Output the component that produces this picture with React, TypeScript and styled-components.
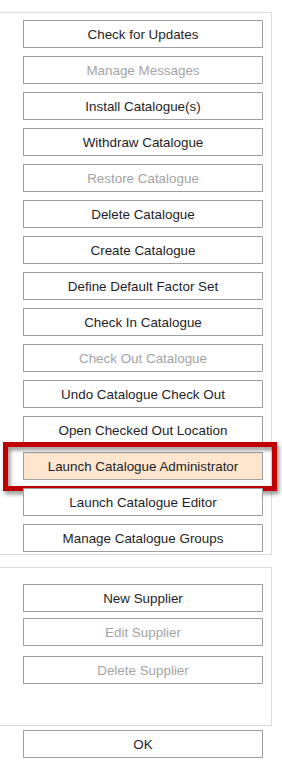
import React from 'react';
import styled, { createGlobalStyle } from 'styled-components';

const GlobalStyle = createGlobalStyle`
	html, body {
		margin: 0;
		padding: 0;
		background: #ffffff;
	}
	body {
		font-family: "Liberation Sans", Arial, sans-serif;
		overflow: hidden;
	}
`;

interface ActionItem {
	label: string,
	disabled?: boolean,
	highlighted?: boolean
}

const catalogueActions: ActionItem[] = [
	{ label: 'Check for Updates' },
	{ label: 'Manage Messages', disabled: true },
	{ label: 'Install Catalogue(s)' },
	{ label: 'Withdraw Catalogue' },
	{ label: 'Restore Catalogue', disabled: true },
	{ label: 'Delete Catalogue' },
	{ label: 'Create Catalogue' },
	{ label: 'Define Default Factor Set' },
	{ label: 'Check In Catalogue' },
	{ label: 'Check Out Catalogue', disabled: true },
	{ label: 'Undo Catalogue Check Out' },
	{ label: 'Open Checked Out Location' },
	{ label: 'Launch Catalogue Administrator', highlighted: true },
	{ label: 'Launch Catalogue Editor' },
	{ label: 'Manage Catalogue Groups' }
];

const Page = styled.div`
	display: flex;
	flex-direction: column;
	padding-top: 12px;
	width: 282px;
	height: 772px;
	box-sizing: border-box;
`;

const Panel = styled.div<{ $padTop: number, $padBottom: number, $spaceAbove?: number }>`
	display: flex;
	flex-direction: column;
	width: 273px;
	margin: ${(p) => p.$spaceAbove || 0}px 0 0 -1px;
	box-sizing: border-box;
	border: 1px solid #dcdcdc;
	padding: ${(p) => p.$padTop}px 9px ${(p) => p.$padBottom}px 23px;
`;

const ButtonList = styled.div`
	display: flex;
	flex-direction: column;
	gap: 8px;
`;

const ActionButton = styled.button<{ $highlighted?: boolean, $gap?: number }>`
	position: relative;
	width: 240px;
	height: 28px;
	margin: ${(p) => p.$gap || 0}px 0 0 0;
	padding: 0;
	box-sizing: border-box;
	border: 1px solid #a0a0a0;
	border-radius: 0;
	background: ${(p) => (p.$highlighted ? '#fde6cd' : '#ffffff')};
	color: #1e1e28;
	font-family: "Liberation Sans", Arial, sans-serif;
	font-size: 13.4px;
	line-height: 27px;
	text-align: center;
	cursor: pointer;

	&:disabled {
		color: #a4a4a4;
		cursor: default;
	}
`;

const Callout = styled.span`
	position: absolute;
	top: -11px;
	left: -21px;
	right: -15px;
	bottom: -12px;
	border: 5px solid #c00000;
	pointer-events: none;
	filter: drop-shadow(2px 3px 2px rgba(0, 0, 0, 0.45));
`;

const Footer = styled.div`
	display: flex;
	padding: 4px 0 0 23px;
`;

export default function App() {
	return (
		<>
			<GlobalStyle />
			<Page>
				<Panel $padTop={7} $padBottom={2}>
					<ButtonList>
						{catalogueActions.map(({ label, disabled, highlighted }) => (
							<ActionButton key={label} disabled={disabled} $highlighted={highlighted}>
								{label}
								{highlighted ? <Callout /> : null}
							</ActionButton>
						))}
					</ButtonList>
				</Panel>
				<Panel $padTop={16} $padBottom={41} $spaceAbove={12}>
					<ActionButton>New Supplier</ActionButton>
					<ActionButton disabled $gap={6}>Edit Supplier</ActionButton>
					<ActionButton disabled $gap={10}>Delete Supplier</ActionButton>
				</Panel>
				<Footer>
					<ActionButton>OK</ActionButton>
				</Footer>
			</Page>
		</>
	);
}
